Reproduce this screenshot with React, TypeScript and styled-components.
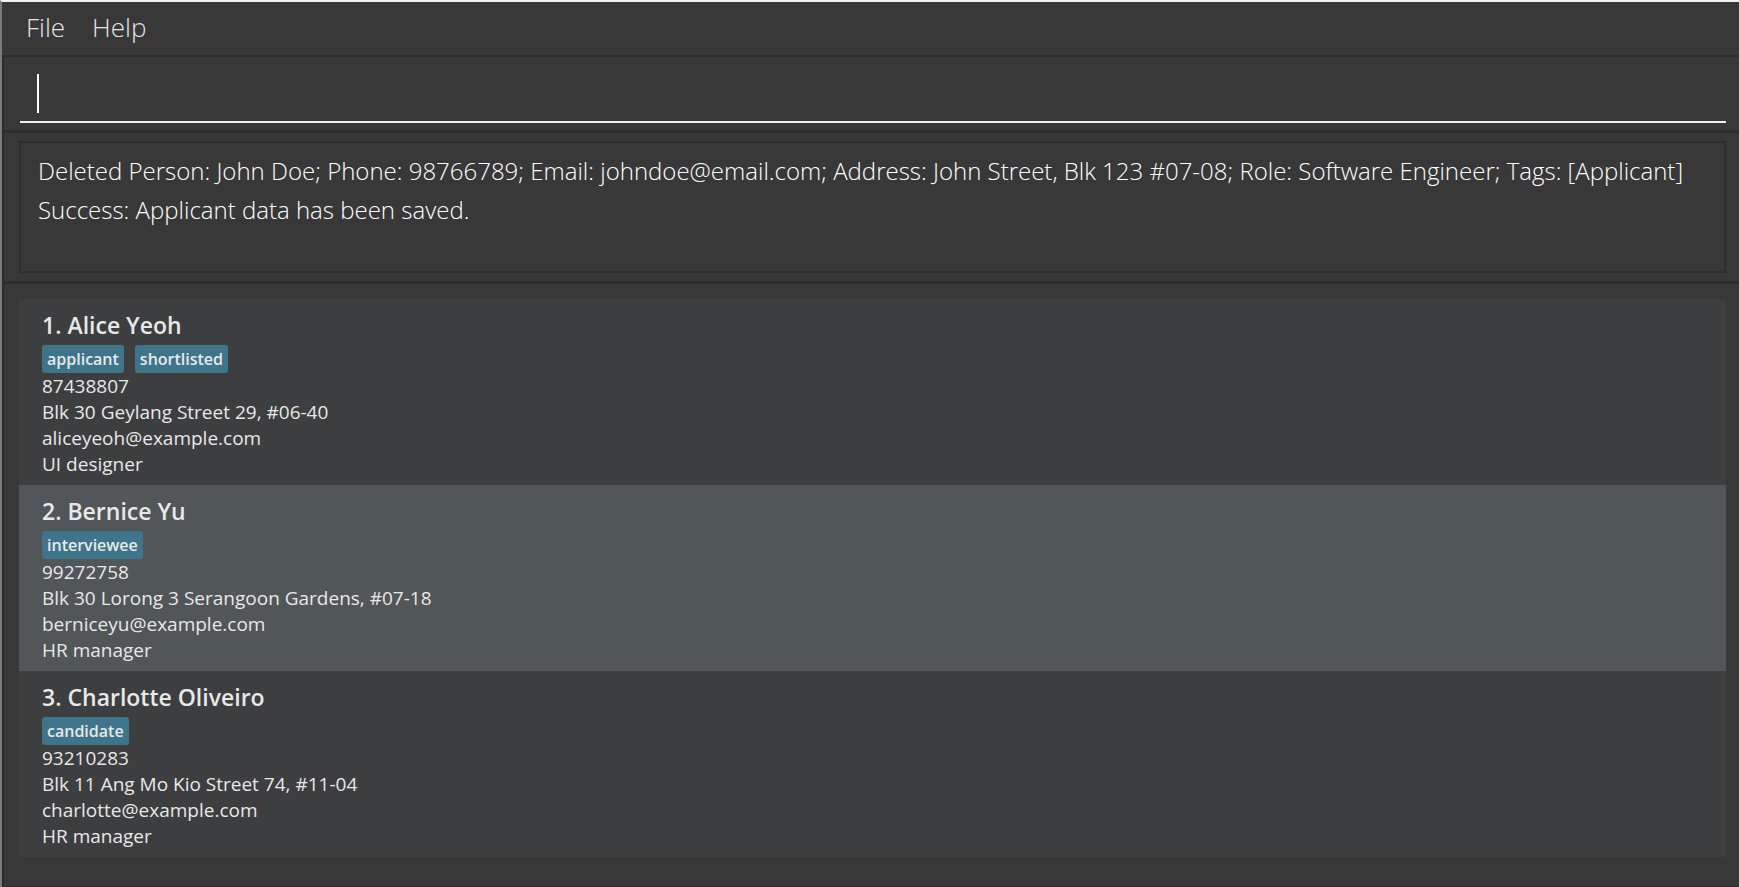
import React from "react";
import styled, { createGlobalStyle } from "styled-components";

const GlobalStyle = createGlobalStyle`
  *, *::before, *::after { box-sizing: border-box; }
  body {
    margin: 0;
    background: #383838;
    font-family: "Open Sans", "Noto Sans", sans-serif;
  }
`;

const Window = styled.div`
  display: flex;
  flex-direction: column;
  min-height: 100vh;
  border-top: 2px solid #f2f2f2;
  border-left: 2px solid #7b7b7b;
  background: #383838;
`;

const MenuBar = styled.nav`
  display: flex;
  gap: 1px;
  height: 53px;
  padding-left: 11px;
`;

const MenuButton = styled.button`
  padding: 0 13px;
  border: 0;
  background: transparent;
  color: #e4e4e4;
  font-family: inherit;
  font-size: 26px;
  font-weight: 300;
  line-height: 50px;
  align-self: flex-start;
`;

const Pane = styled.section`
  border: 2px solid #2c2c2c;
  border-right-width: 0;
  border-bottom-width: 0;
`;

const CommandPane = styled(Pane)`
  padding: 8px 13px 7px 16px;
`;

const CommandField = styled.label`
  display: flex;
  align-items: center;
  height: 58px;
  padding: 0 17px;
  border-bottom: 2px solid #f0f0f0;
`;

const Caret = styled.span`
  width: 2px;
  height: 39px;
  background: #fff;
`;

const CommandInput = styled.input`
  flex: 1;
  min-width: 0;
  padding: 0;
  border: 0;
  outline: 0;
  background: transparent;
  color: #fff;
  caret-color: transparent;
  font-family: inherit;
  font-size: 26px;
  font-weight: 300;
`;

const ResultPane = styled(Pane)`
  padding: 8px 13px 8px 15px;
  border-top-width: 3px;
`;

const ResultText = styled.textarea`
  display: block;
  width: 100%;
  height: 132px;
  padding: 8px 17px;
  border: 2px solid #2e2e2e;
  outline: 0;
  resize: none;
  overflow: hidden;
  background: transparent;
  color: #fff;
  font-family: inherit;
  font-size: 24px;
  font-weight: 300;
  line-height: 39px;
`;

const ListPane = styled(Pane)`
  flex: 1;
  padding: 15px 13px 15px 15px;
  border-top-width: 3px;
  border-bottom-width: 1px;
`;

const PersonList = styled.ul`
  margin: 0;
  padding: 0;
  list-style: none;
`;

const Card = styled.li<{ $alternate: boolean }>`
  padding: 11px 23px 8px;
  background: ${(p) => (p.$alternate ? "#515658" : "#3c3e3f")};
  color: #e8e8e8;
`;

const Name = styled.h2`
  margin: 0;
  font-size: 23px;
  font-weight: 600;
  line-height: 30px;
`;

const Tags = styled.div`
  display: flex;
  gap: 11px;
  margin-top: 5px;
`;

const Tag = styled.span`
  padding: 0 5px;
  border-radius: 3px;
  background: #3e758a;
  font-size: 16px;
  font-weight: 600;
  line-height: 28px;
`;

const Detail = styled.p`
  margin: 0;
  font-size: 19px;
  line-height: 26px;
`;

const people = [
  {
    name: "Alice Yeoh",
    tags: ["applicant", "shortlisted"],
    details: ["87438807", "Blk 30 Geylang Street 29, #06-40", "aliceyeoh@example.com", "UI designer"],
  },
  {
    name: "Bernice Yu",
    tags: ["interviewee"],
    details: ["99272758", "Blk 30 Lorong 3 Serangoon Gardens, #07-18", "berniceyu@example.com", "HR manager"],
  },
  {
    name: "Charlotte Oliveiro",
    tags: ["candidate"],
    details: ["93210283", "Blk 11 Ang Mo Kio Street 74, #11-04", "charlotte@example.com", "HR manager"],
  },
];

const result =
  "Deleted Person: John Doe; Phone: 98766789; Email: johndoe@email.com; Address: John Street, Blk 123 #07-08; Role: Software Engineer; Tags: [Applicant]\n" +
  "Success: Applicant data has been saved.";

export default function App() {
  return (
    <>
      <GlobalStyle />
      <Window>
        <MenuBar>
          <MenuButton type="button">File</MenuButton>
          <MenuButton type="button">Help</MenuButton>
        </MenuBar>
        <CommandPane>
          <CommandField>
            <Caret />
            <CommandInput type="text" aria-label="Command" />
          </CommandField>
        </CommandPane>
        <ResultPane>
          <ResultText readOnly aria-label="Result" value={result} />
        </ResultPane>
        <ListPane>
          <PersonList>
            {people.map((person, i) => (
              <Card key={person.name} $alternate={i % 2 === 1}>
                <Name>
                  {i + 1}. {person.name}
                </Name>
                <Tags>
                  {person.tags.map((tag) => (
                    <Tag key={tag}>{tag}</Tag>
                  ))}
                </Tags>
                {person.details.map((line) => (
                  <Detail key={line}>{line}</Detail>
                ))}
              </Card>
            ))}
          </PersonList>
        </ListPane>
      </Window>
    </>
  );
}
